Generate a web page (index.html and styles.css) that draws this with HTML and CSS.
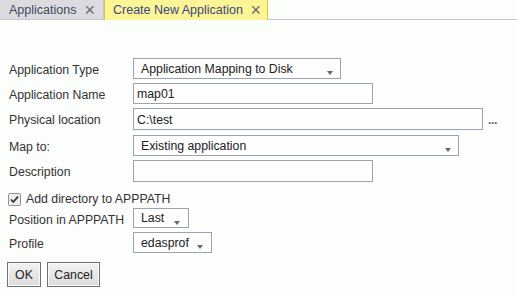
FILE: index.html
```html
<!DOCTYPE html>
<html lang="en">
<head>
  <meta charset="UTF-8" />
  <title>Create New Application</title>
  <link rel="stylesheet" href="styles.css">
</head>
<body>
  <div class="tabs">
    <div class="tab">Applications <span class="close">&times;</span></div>
    <div class="tab active">Create New Application <span class="close">&times;</span></div>
  </div>
  <form class="form">
    <div class="row r-type">
      <label class="lbl">Application Type</label>
      <div class="select w-type">Application Mapping to Disk<span class="arrow"></span></div>
    </div>
    <div class="row r-name">
      <label class="lbl">Application Name</label>
      <input class="input w-name" type="text" value="map01">
    </div>
    <div class="row r-phys">
      <label class="lbl">Physical location</label>
      <input class="input w-phys" type="text" value="C:\test">
      <span class="dots">&middot;&middot;&middot;</span>
    </div>
    <div class="row r-map">
      <label class="lbl">Map to:</label>
      <div class="select w-map">Existing application<span class="arrow"></span></div>
    </div>
    <div class="row r-desc">
      <label class="lbl">Description</label>
      <input class="input w-name" type="text" value="">
    </div>
    <div class="row r-check">
      <span class="check">
        <svg width="13" height="13" viewBox="0 0 13 13">
          <rect x="0.5" y="0.5" width="12" height="12" rx="1" fill="#eeeeee" stroke="#8a8f99"/>
          <path d="M3 6.5 L5.3 9 L10 3.6" fill="none" stroke="#333" stroke-width="1.8"/>
        </svg>
      </span>
      <span class="check-text">Add directory to APPPATH</span>
    </div>
    <div class="row r-pos">
      <label class="lbl">Position in APPPATH</label>
      <div class="select w-pos">Last<span class="arrow"></span></div>
    </div>
    <div class="row r-prof">
      <label class="lbl">Profile</label>
      <div class="select w-prof">edasprof<span class="arrow"></span></div>
    </div>
    <div class="buttons">
      <button type="button" class="btn btn-ok">OK</button>
      <button type="button" class="btn btn-cancel">Cancel</button>
    </div>
  </form>
</body>
</html>
```
FILE: styles.css
```css
* { margin: 0; padding: 0; box-sizing: border-box; }
body {
  font-family: 'Liberation Sans', Arial, sans-serif;
  font-size: 12px;
  color: #333;
  background: #fcfefc;
}
.tabs {
  display: flex; height: 20px;
  border-bottom: 1px solid #c4c6cc;
}
.tab {
  height: 19px; line-height: 20px; padding-left: 9px; font-size: 12.5px;
  background: #dcdce0; color: #3e4a5e; width: 104px;
  border-right: 1px solid #c4c6cc;
}
.tab.active {
  background: #fbf596; color: #3d4680; width: 164px;
  border: 1px solid #d3c73a; border-top: none; border-bottom: none;
  padding-left: 8px; height: 20px;
}
.close {
  font-size: 18px; font-weight: 300; color: #666; float: right; margin-right: 8px; line-height: 20px;
}
.tab.active .close { margin-right: 6px; }
.form { padding: 38px 0 0 8px; }
.row { display: flex; align-items: flex-start; height: 25px; }
.r-phys { height: 27px; }
.r-desc { height: 25px; }
.r-check { height: 23px; align-items: center; padding-top: 5px; }
.r-pos { height: 24px; }
.r-prof { height: 30px; }
.lbl { width: 125px; line-height: 21px; padding-top: 2px; padding-left: 1px; color: #333; font-size: 12.3px; }
.select, .input {
  height: 21px; border: 1px solid #9aa3b4; background: #fdfefd;
  font: inherit; font-size: 12.3px; color: #222;
}
.r-phys .input, .r-desc .input { height: 22px; }
.r-pos .select { height: 20px; line-height: 18px; }
.select {
  position: relative; line-height: 20px; padding-left: 7px;
}
.input { padding: 1px 0 0 3px; outline: none; }
.arrow {
  position: absolute; right: 7px; top: 12px;
  border-left: 3.5px solid transparent; border-right: 3.5px solid transparent;
  border-top: 4px solid #666;
}
.r-pos .arrow, .r-prof .arrow { top: 12px; right: 8px; }
.w-type { width: 208px; }
.w-name { width: 240px; }
.w-phys { width: 350px; }
.w-map { width: 326px; }
.w-pos { width: 56px; }
.w-prof { width: 79px; }
.dots { margin-left: 5px; line-height: 30px; color: #666; letter-spacing: -1px; font-weight: bold; }
.check { width: 14px; height: 13px; display: flex; }
.check-text { margin-left: 4px; line-height: 16px; font-size: 12.3px; }
.buttons { display: flex; gap: 6px; margin-left: -1px; }
.btn {
  height: 25px; font: inherit; font-size: 12.3px; color: #222;
  border: 1px solid #6f7174; border-radius: 0;
  background: linear-gradient(#f2f2f2, #dcdcdc);
  box-shadow: inset 0 0 0 1px #fafafa;
}
.btn-ok { width: 34px; }
.btn-cancel { width: 53px; }
```
